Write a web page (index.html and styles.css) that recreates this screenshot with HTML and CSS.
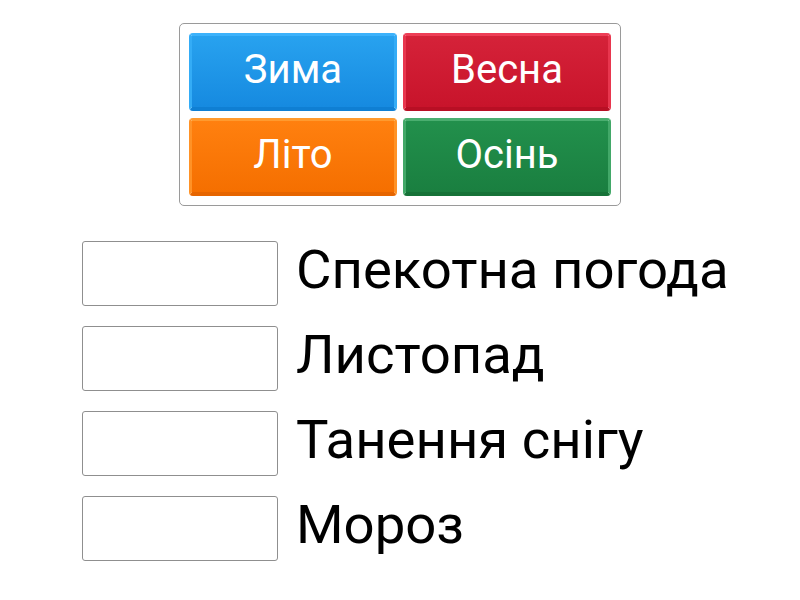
FILE: index.html
```html
<!DOCTYPE html>
<html lang="uk">
<head>
<meta charset="utf-8">
<title>Пори року</title>
<link rel="stylesheet" href="styles.css">
</head>
<body>
<div class="page">
  <div class="bank">
    <div class="tile tile-blue">Зима</div>
    <div class="tile tile-red">Весна</div>
    <div class="tile tile-orange">Літо</div>
    <div class="tile tile-green">Осінь</div>
  </div>
  <div class="list">
    <div class="row"><div class="slot"></div><div class="label">Спекотна погода</div></div>
    <div class="row"><div class="slot"></div><div class="label">Листопад</div></div>
    <div class="row"><div class="slot"></div><div class="label">Танення снігу</div></div>
    <div class="row"><div class="slot"></div><div class="label">Мороз</div></div>
  </div>
</div>
</body>
</html>
```
FILE: styles.css
```css
html, body {
  margin: 0;
  background: #ffffff;
}
body {
  font-family: Roboto, "Noto Sans", sans-serif;
  color: #000;
}
.page {
  padding-top: 23px;
}
.bank {
  box-sizing: border-box;
  width: 442px;
  margin: 0 auto;
  padding: 9px;
  border: 1px solid #9a9a9a;
  border-radius: 5px;
  display: grid;
  grid-template-columns: 208px 208px;
  grid-auto-rows: 78px;
  column-gap: 6px;
  row-gap: 7px;
}
.tile {
  box-sizing: border-box;
  border-radius: 4px;
  border-style: solid;
  border-width: 3px 3px 4px 3px;
  display: flex;
  align-items: center;
  justify-content: center;
  color: #fff;
  font-size: 40px;
  font-weight: 400;
  line-height: 1;
  padding-bottom: 3px;
}
.tile-blue {
  background: linear-gradient(#28a2ef, #168ae0);
  border-color: #3cb2fb #34acf6 #0f7fd3 #34acf6;
}
.tile-red {
  background: linear-gradient(#d52239, #c8142b);
  border-color: #ee3e56 #e8364e #b80f24 #e8364e;
}
.tile-orange {
  background: linear-gradient(#ff800f, #f56f00);
  border-color: #ff9a2e #ff9226 #e66500 #ff9226;
}
.tile-green {
  background: linear-gradient(#22904c, #1a7f40);
  border-color: #4aae6f #42a868 #167238 #42a868;
}
.list {
  margin-top: 35px;
  padding-left: 82px;
  display: flex;
  flex-direction: column;
  gap: 20px;
}
.row {
  display: flex;
  align-items: center;
  gap: 18px;
}
.slot {
  box-sizing: border-box;
  width: 196px;
  height: 65px;
  border: 1px solid #8f8f8f;
  border-radius: 3px;
  flex: none;
}
.label {
  font-size: 54.5px;
  line-height: 1;
  padding-bottom: 9px;
}
```
